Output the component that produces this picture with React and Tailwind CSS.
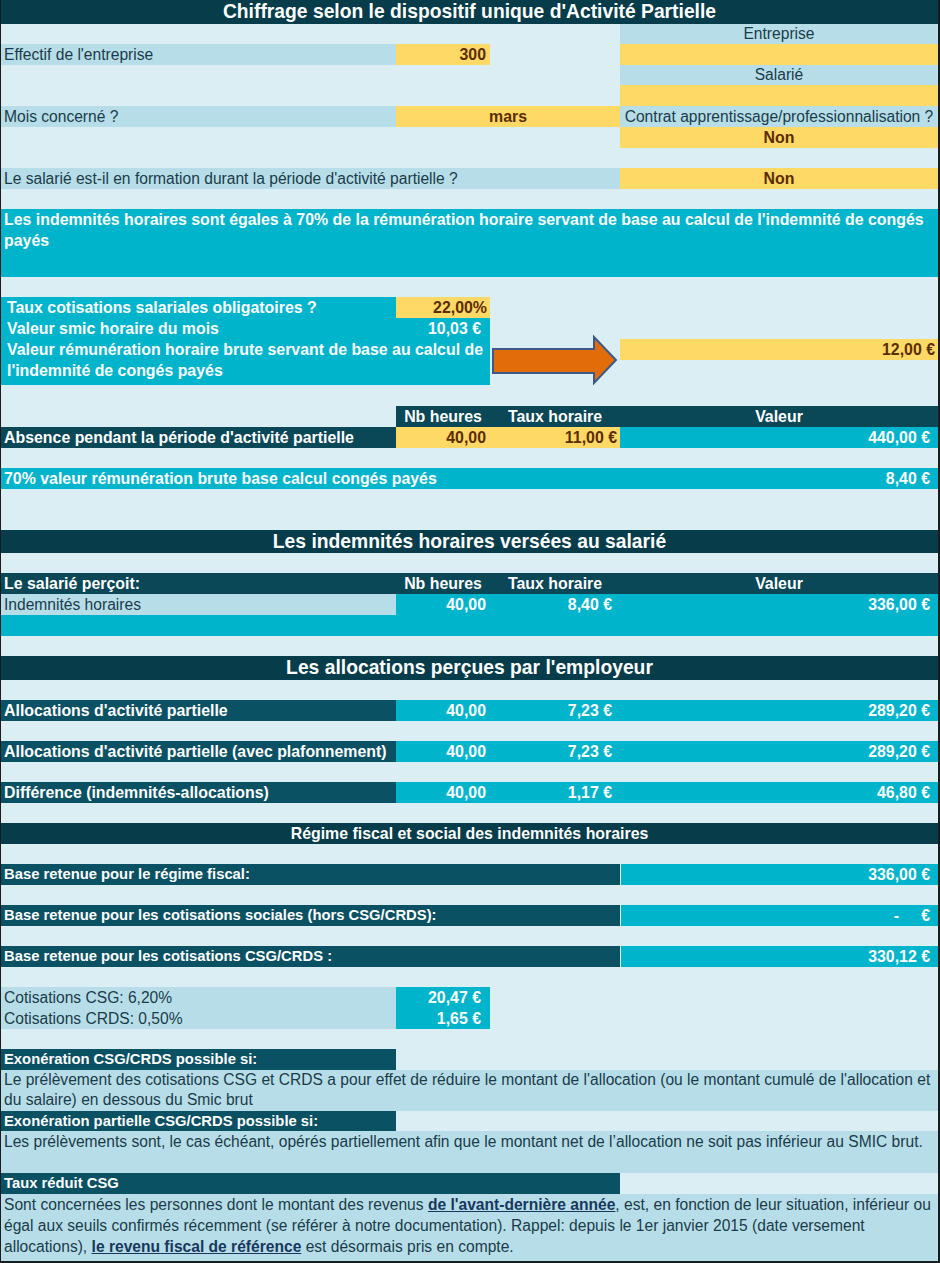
import clsx from "clsx";

// Column widths (spreadsheet grid)
const A = "w-[395px]";
const AB = "w-[489px]";
const ABC = "w-[619px]";
const B = "w-[94px]";
const BC = "w-[224px]";
const C = "w-[130px]";
const D = "flex-1";

// Fills
const LB = "bg-[#b7dee8]";
const TEAL = "bg-[#00b4cc]";
const YEL = "bg-[#ffd966]";
const DARK = "bg-[#073c4a]";
const HEAD = "bg-[#0a4757]";
const LAB = "bg-[#0b5164]";

// Bold cell text renders a touch wider in the sheet
const BOLD = "font-bold text-[15.9px]";
const SMALL = "font-bold text-[14.8px] text-white";

const Row = ({ h, className, children }) => (
    <div className={clsx("flex w-full", h, className)}>{children}</div>
);

const Cell = ({ w, bg, className, children }) => (
    <div className={clsx("flex h-full items-center whitespace-nowrap", w, bg, className)}>
        {children}
    </div>
);

const Label = ({ children }) => (
    <span className="pl-[3px] text-[#1b3b4a]">{children}</span>
);

const Title = ({ h, small, children }) => (
    <Row h={h} className={DARK}>
        <div
            className={clsx(
                "flex w-full items-center justify-center font-bold text-white",
                small ? "text-[15.9px]" : "text-[19.3px]"
            )}
        >
            {children}
        </div>
    </Row>
);

const Gap = ({ h }) => <Row h={h} />;

const Arrow = () => (
    <svg width="130" height="46" viewBox="0 0 130 46" className="overflow-visible">
        <path
            d="M3 10 H104 V-2 L126 21 L104 44 V34 H3 Z"
            fill="#e36c0a"
            stroke="#3b5a8c"
            strokeWidth="2"
            strokeLinejoin="miter"
        />
    </svg>
);

// Allocation rows share the same look
const AllocRow = ({ label, hours, rate, value }) => (
    <Row h="h-[21px]" className={clsx(BOLD, "text-white")}>
        <Cell w={A} bg={LAB} className="pl-[3px]">{label}</Cell>
        <Cell w={B} bg={TEAL} className="justify-end pr-[4px]">{hours}</Cell>
        <Cell w={C} bg={TEAL} className="justify-end pr-[8px]">{rate}</Cell>
        <Cell w={D} bg={TEAL} className="justify-end pr-[8px]">{value}</Cell>
    </Row>
);

const BaseRow = ({ label, children }) => (
    <Row h="h-[21px]">
        <Cell w={ABC} bg={LAB} className={clsx("pl-[3px]", SMALL)}>{label}</Cell>
        <Cell w={D} bg={TEAL} className={clsx("justify-end border-l border-[#daeef3] pr-[8px] text-white", BOLD)}>
            {children}
        </Cell>
    </Row>
);

const App = () => {
    return (
        <div className="min-h-screen bg-white">
            <div className="w-[940px] border-b-2 border-l border-r-2 border-[#1c1c1c] bg-[#daeef3] font-['Liberation_Sans',Arial,sans-serif] text-[15.6px] leading-none">
                <Title h="h-[24px]">Chiffrage selon le dispositif unique d'Activité Partielle</Title>

                {/* Identification */}
                <Row h="h-[20px]">
                    <Cell w={ABC} />
                    <Cell w={D} bg={LB} className="justify-center text-[#1b3b4a]">Entreprise</Cell>
                </Row>
                <Row h="h-[21px]">
                    <Cell w={A} bg={LB}><Label>Effectif de l'entreprise</Label></Cell>
                    <Cell w={B} bg={YEL} className={clsx("justify-end pr-[4px] text-[#5b2d00]", BOLD)}>300</Cell>
                    <Cell w={C} />
                    <Cell w={D} bg={YEL} />
                </Row>
                <Row h="h-[20px]">
                    <Cell w={ABC} />
                    <Cell w={D} bg={LB} className="justify-center text-[#1b3b4a]">Salarié</Cell>
                </Row>
                <Row h="h-[21px]">
                    <Cell w={ABC} />
                    <Cell w={D} bg={YEL} />
                </Row>
                <Row h="h-[21px]">
                    <Cell w={A} bg={LB}><Label>Mois concerné ?</Label></Cell>
                    <Cell w={BC} bg={YEL} className={clsx("justify-center text-[#5b2d00]", BOLD)}>mars</Cell>
                    <Cell w={D} bg={LB} className="justify-center text-[#1b3b4a]">
                        Contrat apprentissage/professionnalisation ?
                    </Cell>
                </Row>
                <Row h="h-[21px]">
                    <Cell w={ABC} />
                    <Cell w={D} bg={YEL} className={clsx("justify-center text-[#5b2d00]", BOLD)}>Non</Cell>
                </Row>
                <Gap h="h-[20px]" />
                <Row h="h-[21px]">
                    <Cell w={ABC} bg={LB}>
                        <Label>Le salarié est-il en formation durant la période d'activité partielle ?</Label>
                    </Cell>
                    <Cell w={D} bg={YEL} className={clsx("justify-center text-[#5b2d00]", BOLD)}>Non</Cell>
                </Row>
                <Gap h="h-[20px]" />

                {/* Rule */}
                <div className={clsx("h-[68px] whitespace-nowrap px-[3px] leading-[21px] text-white", BOLD, TEAL)}>
                    Les indemnités horaires sont égales à 70% de la rémunération horaire servant de base au calcul de l'indemnité de congés
                    <br />
                    payés
                </div>
                <Gap h="h-[20px]" />

                {/* Rates */}
                <Row h="h-[21px]" className={BOLD}>
                    <Cell w={A} bg={TEAL} className="pl-[6px] text-white">
                        Taux cotisations salariales obligatoires ?
                    </Cell>
                    <Cell w={B} bg={YEL} className="justify-end pr-[3px] text-[#5b2d00]">22,00%</Cell>
                </Row>
                <Row h="h-[21px]" className={clsx(BOLD, "text-white")}>
                    <Cell w={A} bg={TEAL} className="pl-[6px]">Valeur smic horaire du mois</Cell>
                    <Cell w={B} bg={TEAL} className="justify-end pr-[9px]">10,03 €</Cell>
                </Row>
                <Row h="h-[46px]">
                    <div className={clsx(AB, TEAL, BOLD, "whitespace-nowrap pl-[6px] leading-[21px] text-white")}>
                        Valeur rémunération horaire brute servant de base au calcul de
                        <br />
                        l'indemnité de congés payés
                    </div>
                    <div className={C}>
                        <Arrow />
                    </div>
                    <div className={D}>
                        <div className={clsx("flex h-[21px] items-center justify-end pr-[3px] text-[#5b2d00]", BOLD, YEL)}>
                            12,00 €
                        </div>
                    </div>
                </Row>
                <Gap h="h-[21px]" />

                {/* Absence */}
                <Row h="h-[21px]" className={clsx(BOLD, "text-white")}>
                    <Cell w={A} />
                    <Cell w={B} bg={HEAD} className="justify-center">Nb heures</Cell>
                    <Cell w={C} bg={HEAD} className="justify-center">Taux horaire</Cell>
                    <Cell w={D} bg={HEAD} className="justify-center">Valeur</Cell>
                </Row>
                <Row h="h-[21px]" className={BOLD}>
                    <Cell w={A} bg={HEAD} className="pl-[3px] text-white">
                        Absence pendant la période d'activité partielle
                    </Cell>
                    <Cell w={B} bg={YEL} className="justify-end pr-[4px] text-[#5b2d00]">40,00</Cell>
                    <Cell w={C} bg={YEL} className="justify-end pr-[3px] text-[#5b2d00]">11,00 €</Cell>
                    <Cell w={D} bg={TEAL} className="justify-end pr-[8px] text-white">440,00 €</Cell>
                </Row>
                <Gap h="h-[20px]" />
                <Row h="h-[21px]" className={clsx(TEAL, BOLD, "text-white")}>
                    <Cell w="flex-1" className="pl-[3px]">70% valeur rémunération brute base calcul congés payés</Cell>
                    <Cell className="pr-[8px]">8,40 €</Cell>
                </Row>
                <Gap h="h-[41px]" />

                {/* Indemnités */}
                <Title h="h-[23px]">Les indemnités horaires versées au salarié</Title>
                <Gap h="h-[20px]" />
                <Row h="h-[21px]" className={clsx(HEAD, BOLD, "text-white")}>
                    <Cell w={A} className="pl-[3px]">Le salarié perçoit:</Cell>
                    <Cell w={B} className="justify-center">Nb heures</Cell>
                    <Cell w={C} className="justify-center">Taux horaire</Cell>
                    <Cell w={D} className="justify-center">Valeur</Cell>
                </Row>
                <Row h="h-[21px]">
                    <Cell w={A} bg={LB}><Label>Indemnités horaires</Label></Cell>
                    <Cell w={B} bg={TEAL} className={clsx("justify-end pr-[4px] text-white", BOLD)}>40,00</Cell>
                    <Cell w={C} bg={TEAL} className={clsx("justify-end pr-[8px] text-white", BOLD)}>8,40 €</Cell>
                    <Cell w={D} bg={TEAL} className={clsx("justify-end pr-[8px] text-white", BOLD)}>336,00 €</Cell>
                </Row>
                <Row h="h-[21px]" className={TEAL} />
                <Gap h="h-[20px]" />

                {/* Allocations */}
                <Title h="h-[24px]">Les allocations perçues par l'employeur</Title>
                <Gap h="h-[20px]" />
                <AllocRow label="Allocations d'activité partielle" hours="40,00" rate="7,23 €" value="289,20 €" />
                <Gap h="h-[20px]" />
                <AllocRow
                    label="Allocations d'activité partielle (avec plafonnement)"
                    hours="40,00"
                    rate="7,23 €"
                    value="289,20 €"
                />
                <Gap h="h-[20px]" />
                <AllocRow label="Différence (indemnités-allocations)" hours="40,00" rate="1,17 €" value="46,80 €" />
                <Gap h="h-[20px]" />

                {/* Régime fiscal */}
                <Title h="h-[21px]" small>Régime fiscal et social des indemnités horaires</Title>
                <Gap h="h-[20px]" />
                <BaseRow label="Base retenue pour le régime fiscal:">336,00 €</BaseRow>
                <Gap h="h-[20px]" />
                <BaseRow label="Base retenue pour les cotisations sociales (hors CSG/CRDS):">
                    <span className="mr-[22px]">-</span>€
                </BaseRow>
                <Gap h="h-[20px]" />
                <BaseRow label="Base retenue pour les cotisations CSG/CRDS :">330,12 €</BaseRow>
                <Gap h="h-[20px]" />
                <Row h="h-[21px]">
                    <Cell w={A} bg={LB}><Label>Cotisations CSG: 6,20%</Label></Cell>
                    <Cell w={B} bg={TEAL} className={clsx("justify-end pr-[9px] text-white", BOLD)}>20,47 €</Cell>
                </Row>
                <Row h="h-[21px]">
                    <Cell w={A} bg={LB}><Label>Cotisations CRDS: 0,50%</Label></Cell>
                    <Cell w={B} bg={TEAL} className={clsx("justify-end pr-[9px] text-white", BOLD)}>1,65 €</Cell>
                </Row>
                <Gap h="h-[20px]" />

                {/* Exonérations */}
                <Row h="h-[21px]">
                    <Cell w={A} bg={LAB} className={clsx("pl-[3px]", SMALL)}>
                        Exonération CSG/CRDS possible si:
                    </Cell>
                </Row>
                <div className={clsx("h-[41px] whitespace-nowrap px-[3px] leading-[20px] text-[#1b3b4a]", LB)}>
                    Le prélèvement des cotisations CSG et CRDS a pour effet de réduire le montant de l'allocation (ou le montant cumulé de l'allocation et
                    <br />
                    du salaire) en dessous du Smic brut
                </div>
                <Row h="h-[20px]">
                    <Cell w={A} bg={LAB} className={clsx("pl-[3px]", SMALL)}>
                        Exonération partielle CSG/CRDS possible si:
                    </Cell>
                </Row>
                <div className={clsx("h-[42px] whitespace-nowrap px-[3px] leading-[21px] text-[#1b3b4a]", LB)}>
                    Les prélèvements sont, le cas échéant, opérés partiellement afin que le montant net de l’allocation ne soit pas inférieur au SMIC brut.
                </div>
                <Row h="h-[21px]">
                    <Cell w={ABC} bg={LAB} className={clsx("pl-[3px]", SMALL)}>Taux réduit CSG</Cell>
                </Row>
                <div className={clsx("h-[67px] whitespace-nowrap px-[3px] leading-[21px] text-[#1b3b4a]", LB)}>
                    Sont concernées les personnes dont le montant des revenus{" "}
                    <a className="font-bold text-[#17375e] underline">de l'avant-dernière année</a>, est, en fonction de leur situation, inférieur ou
                    <br />
                    égal aux seuils confirmés récemment (se référer à notre documentation). Rappel: depuis le 1er janvier 2015 (date versement
                    <br />
                    allocations), <a className="font-bold text-[#17375e] underline">le revenu fiscal de référence</a> est désormais pris en compte.
                </div>
            </div>
        </div>
    );
};

export default App;
